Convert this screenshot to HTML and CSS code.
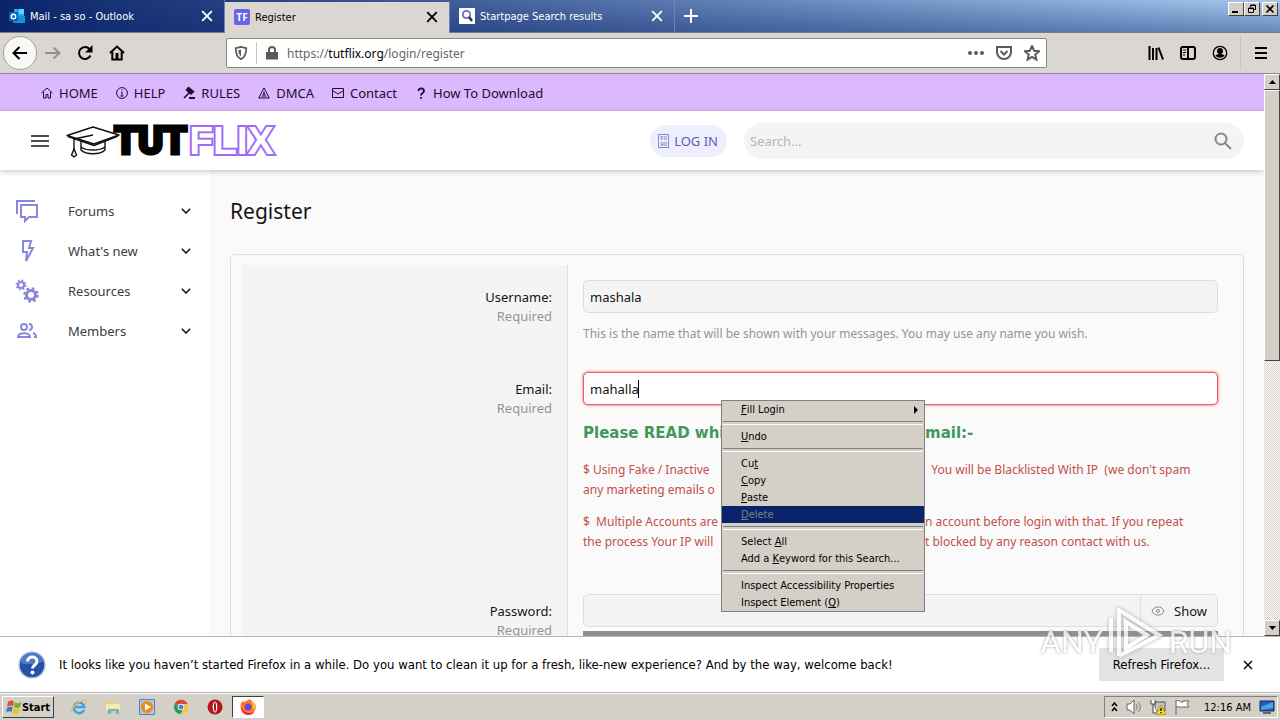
FILE: index.html
```
<!DOCTYPE html>
<html lang="en">
<head>
  <meta charset="UTF-8" />
  <meta name="viewport" content="width=device-width, initial-scale=1.0"/>
  <title>Register</title>
  <link rel="stylesheet" href="styles.css">
</head>
<body>
  <!-- tabs -->
  <header class="titlebar">
    <div class="tab">
      <svg class="fav" viewBox="0 0 16 16"><path fill="#28a8ea" d="M5 1h10v7H5z"/><path fill="#50d9ff" d="M10 1h5v5h-5z"/><path fill="#1490df" d="M4 7l12 1v7H4z"/><path fill="#0f5fb5" d="M0 4h9v9H0z"/><circle cx="4.5" cy="8.5" r="2.2" fill="none" stroke="#fff" stroke-width="1.4"/></svg>
      <span class="tab-name">Mail - sa so - Outlook</span>
      <button class="tab-close" aria-label="Close tab"><svg viewBox="0 0 10 10"><path d="M1 1l8 8M9 1L1 9"/></svg></button>
    </div>
    <div class="tab active">
      <span class="fav tf">TF</span>
      <span class="tab-name">Register</span>
      <button class="tab-close" aria-label="Close tab"><svg viewBox="0 0 10 10"><path d="M1 1l8 8M9 1L1 9"/></svg></button>
    </div>
    <div class="tab">
      <svg class="fav" viewBox="0 0 16 16"><path fill="#fff" d="M0 0h16v16H0z"/><circle cx="7.5" cy="6.5" r="3.7" fill="none" stroke="#5f6bd0" stroke-width="1.8"/><path d="M10 9l3 4" stroke="#222b55" stroke-width="2.4"/></svg>
      <span class="tab-name">Startpage Search results</span>
      <button class="tab-close" aria-label="Close tab"><svg viewBox="0 0 10 10"><path d="M1 1l8 8M9 1L1 9"/></svg></button>
    </div>
    <button class="new-tab" aria-label="New tab"><svg viewBox="0 0 14 14"><path d="M7 0v14M0 7h14"/></svg></button>
    <div class="win-buttons">
      <button aria-label="Minimize"><svg viewBox="0 0 10 10"><path fill="#000" d="M1 7h6v2H1z"/></svg></button>
      <button aria-label="Restore"><svg viewBox="0 0 10 10"><path d="M3.5 3V1h5v4.5H7M3 1.5h6M1.5 4h5v4.5h-5zM1 4.5h6" fill="none" stroke="#000"/></svg></button>
      <button class="close" aria-label="Close"><svg viewBox="0 0 10 10"><path d="M1.500 1.500l7 7M8.500 1.500l-7 7" stroke="#000" stroke-width="1.6"/></svg></button>
    </div>
  </header>

  <!-- toolbar -->
  <div class="toolbar">
    <button class="back" aria-label="Back"><svg class="i16" viewBox="0 0 16 16"><path d="M15 8H1.500M7.500 2L1.500 8l6 6"/></svg></button>
    <button class="tool forward" aria-label="Forward"><svg class="i16" viewBox="0 0 16 16"><path d="M0 8h14M8.500 2.500L14.500 8l-6 5.500"/></svg></button>
    <button class="tool" aria-label="Reload"><svg class="i16" viewBox="0 0 16 16"><path d="M13.500 10.500A6 6 0 1 1 12.500 4"/><path d="M15.500 0v7.500H8z" fill="#000" stroke="none"/></svg></button>
    <button class="tool" aria-label="Home"><svg class="i16" viewBox="0 0 16 16"><path d="M1 8l7-6.500L15 8M3.300 7v7.500h9.400V7"/><path d="M6.500 8h3v6h-3z" fill="#000" stroke="none"/></svg></button>
    <div class="urlbar">
      <svg class="i14" viewBox="0 0 16 16"><path d="M8 1l6 1.500C14 9 12 13 8 15 4 13 2 9 2 2.500z"/><path d="M8 4l-3 .8C5.200 8.500 6.200 10.500 8 12z" fill="#5b5b5b" stroke="none"/></svg>
      <span class="split"></span>
      <svg class="i14" viewBox="0 0 14 14"><path d="M4 7V4a3 3 0 0 1 6 0v3"/><path d="M1 6h12v7.500H1z" fill="#5b5b5b" stroke="none"/></svg>
      <span class="url">https://<b>tutflix.org</b>/login/register</span>
      <svg class="i16" viewBox="0 0 16 16"><g fill="#5b5b5b" stroke="none"><circle cx="2" cy="8" r="2"/><circle cx="8" cy="8" r="2"/><circle cx="14" cy="8" r="2"/></g></svg>
      <svg class="i16" viewBox="0 0 16 16"><path d="M1 2h14v5c0 4-3 7-7 7s-7-3-7-7zM4.500 6L8 9.500 11.500 6"/></svg>
      <svg class="i16" viewBox="0 0 16 16"><path d="M8 1l2.100 4.700 5 .5-3.800 3.400 1.100 5L8 12l-4.400 2.600 1.100-5L.9 6.200l5-.5z"/></svg>
    </div>
    <div class="tools-right">
      <button class="tool" aria-label="Library"><svg class="i16" viewBox="0 0 16 16"><path d="M1.500 1v14M5 3v12M8.500 3v12M10.500 2.500l4.500 12"/></svg></button>
      <button class="tool" aria-label="Sidebar"><svg class="i16" viewBox="0 0 16 16"><rect x="1" y="2" width="14" height="12" rx="2"/><path d="M8 2v12"/><path d="M3 5h3M3 7.500h3M3 10h2" stroke-width="1"/></svg></button>
      <button class="tool" aria-label="Account"><svg class="i16" viewBox="0 0 16 16"><circle cx="8" cy="8" r="6.700" stroke-width="1.300"/><g fill="#000" stroke="none"><circle cx="8" cy="6" r="3"/><path d="M3.500 10.500c2-2 7-2 9 0-2 3-7 3-9 0z"/></g></svg></button>
      <span class="split"></span>
      <button class="tool" aria-label="Menu"><svg class="i16" viewBox="0 0 16 16"><path d="M2 3h12M2 8h12M2 13h12"/></svg></button>
    </div>
  </div>

  <!-- page -->
  <div class="viewport">
    <div class="site">
      <nav class="topnav">
        <a href="#"><svg viewBox="0 0 12 12"><path d="M.5 6L6 1l5.500 5M2.500 5v6h2.500V7.500h2V11h2.500V5"/></svg>HOME</a>
        <a href="#"><svg viewBox="0 0 12 12"><circle cx="6" cy="6" r="5.400"/><path d="M6 5v4M5 5.500h1M4.500 9h3M6 2.500v1.200"/></svg>HELP</a>
        <a href="#"><svg viewBox="0 0 12 12"><path d="M5.500.5l5 4-2.500 2.500-4.500-4zM6 6l-5 5" stroke-width="1.600" fill="#1d0c33"/><path d="M6 11h6" stroke-width="2"/></svg>RULES</a>
        <a href="#"><svg viewBox="0 0 12 12"><path d="M6 1l5.300 10H.7zM6 4.500v3M6 8.500v1.300M4 10l2-4 2 4"/></svg>DMCA</a>
        <a href="#"><svg viewBox="0 0 12 12"><path d="M.5 1.500h11v9H.5zM.5 3.500L6 7l5.500-3.500"/></svg>Contact</a>
        <a href="#"><svg viewBox="0 0 12 12"><path d="M3.500 4c0-3.500 5.500-3.500 5.500 0C9 6 6 6 6 8.500M6 10v1.700" stroke-width="1.800"/></svg>How To Download</a>
      </nav>

      <div class="site-header">
        <button class="burger" aria-label="Menu"><svg viewBox="0 0 18 14"><path d="M0 2h18M0 7h18M0 12h18"/></svg></button>
        <a class="logo" href="#">
          <svg class="cap" viewBox="0 0 54 34"><g fill="#fff" stroke="#111" stroke-width="1.400" stroke-linejoin="round"><path d="M15 15v11c5 5 19 5 24 0V15"/><path d="M15 23c5 4 19 4 24 0" fill="none"/><path d="M1 11.500L27 3l26 8L28 20z"/><path d="M2 12.500l26 9 24-9.500M27 11L8 15v11" fill="none"/><path d="M8 25l-2.500 6 2.500 2 2.500-2z"/></g></svg>
          <span class="tut">TUT</span><span class="flix">FLIX</span>
        </a>
        <a class="login" href="#"><span class="tofu"><span>F0</span><span>90</span></span>LOG IN</a>
        <div class="search">
          <input type="text" placeholder="Search..." aria-label="Search">
          <svg viewBox="0 0 18 18"><circle cx="7" cy="7" r="5.500"/><path d="M11 11l6 6"/></svg>
        </div>
      </div>

      <div class="site-body">
        <nav class="side">
          <a href="#"><svg class="side-icon" viewBox="0 0 24 24"><path d="M2 15V2h18M6 6h16v12h-8l-4 4v-4H6z"/></svg>Forums<svg class="chev" viewBox="0 0 10 6"><path d="M.8.8L5 5 9.200.8"/></svg></a>
          <a href="#"><svg class="side-icon" viewBox="0 0 24 24"><path d="M8 2h8l-2 7h4l-7 13 1-9H8z"/></svg>What's new<svg class="chev" viewBox="0 0 10 6"><path d="M.8.8L5 5 9.200.8"/></svg></a>
          <a href="#"><svg class="side-icon" viewBox="0 0 24 24"><circle cx="6" cy="6" r="3"/><circle cx="6" cy="6" r="4.500" stroke-dasharray="1.600 1.930"/><circle cx="16" cy="16" r="4.500" stroke-width="3"/><circle cx="16" cy="16" r="6.500" stroke-width="2.600" stroke-dasharray="2.500 2.600"/></svg>Resources<svg class="chev" viewBox="0 0 10 6"><path d="M.8.8L5 5 9.200.8"/></svg></a>
          <a href="#"><svg class="side-icon" viewBox="0 0 24 24"><circle cx="9" cy="8" r="3"/><path d="M3 18c0-5 12-5 12 0zM14 5c4 0 4 6 0 6M18 14c3 1 3 2 3 4h-2"/></svg>Members<svg class="chev" viewBox="0 0 10 6"><path d="M.8.8L5 5 9.200.8"/></svg></a>
        </nav>

        <main>
          <h1>Register</h1>
          <form class="card">
            <div class="row">
              <div class="label"><label for="username">Username:</label><small>Required</small></div>
              <div class="field">
                <input class="input" id="username" type="text" value="mashala">
                <p class="hint">This is the name that will be shown with your messages. You may use any name you wish.</p>
              </div>
            </div>
            <div class="row">
              <div class="label"><label for="email">Email:</label><small>Required</small></div>
              <div class="field">
                <div class="input focus"><input id="email" type="text" value="mahalla" size="5"><i class="caret"></i></div>
                <h4 class="notice-title split-line"><span>Please READ whi</span><span>mail:-</span></h4>
                <div class="notice">
                  <p class="split-line"><span>$ Using Fake / Inactive</span><span>&nbsp; You will be Blacklisted With IP&nbsp; (we don't spam</span></p>
                  <p>any marketing emails o</p>
                </div>
                <div class="notice">
                  <p class="split-line"><span>$&nbsp; Multiple Accounts are</span><span>n account before login with that. If you repeat</span></p>
                  <p class="split-line"><span>the process Your IP will</span><span>t blocked by any reason contact with us.</span></p>
                </div>
              </div>
            </div>
            <div class="row">
              <div class="label"><label for="password">Password:</label><small>Required</small></div>
              <div class="field">
                <div class="input password">
                  <input id="password" type="password">
                  <button type="button"><svg viewBox="0 0 14 10"><path d="M1 5c2-5.500 10-5.500 12 0-2 5.500-10 5.500-12 0z"/><circle cx="7" cy="5" r="1.500"/></svg>Show</button>
                </div>
                <div class="strength"></div>
              </div>
            </div>
          </form>
        </main>
      </div>
    </div>

    <div class="scrollbar">
      <button aria-label="Scroll up"><svg viewBox="0 0 7 4"><path d="M0 4l3.500-4L7 4z"/></svg></button>
      <div class="thumb"></div>
      <button class="down" aria-label="Scroll down"><svg viewBox="0 0 7 4"><path d="M0 0l3.500 4L7 0z"/></svg></button>
    </div>
  </div>

  <!-- firefox notification -->
  <div class="notification">
    <svg class="help" viewBox="0 0 28 28"><circle cx="14" cy="14" r="13" fill="#2450a8" stroke="#b9c6e2" stroke-width="1.500"/><path d="M3 12a11 10 0 0 1 22-1c-7 1-14 4-22 1z" fill="#4f78c6"/><path d="M9.500 10.500c0-6 9.500-6 9.500 0 0 3.500-4.500 3.500-4.500 7" fill="none" stroke="#fff" stroke-width="3"/><circle cx="14.500" cy="21.500" r="2" fill="#fff"/></svg>
    <span class="message">It looks like you haven’t started Firefox in a while. Do you want to clean it up for a fresh, like-new experience? And by the way, welcome back!</span>
    <button class="refresh">Refresh Firefox...</button>
    <button class="dismiss" aria-label="Dismiss"><svg viewBox="0 0 10 10"><path d="M1 1l8 8M9 1L1 9"/></svg></button>
  </div>

  <!-- taskbar -->
  <footer class="taskbar">
    <button class="start"><svg viewBox="0 0 16 16"><path fill="#e0522a" d="M2 3c2-2 4-2 6-.5L7 7.500C5 6 3 6.500 1 8z"/><path fill="#6cb52d" d="M9 3c2 1.500 4 1.500 6.500 0L14 8c-2 1.500-4 1-6 0z"/><path fill="#3c78d0" d="M1 9c2-1.500 4-1.500 5.700-.5L5.500 13C4 12 2 12 0 13.500z"/><path fill="#f5bc1c" d="M7.700 9c2 1.500 4 1.500 6 .3L12.500 14c-2 1.500-4 1-6 0z"/></svg>Start</button>
    <a href="#" aria-label="Internet Explorer"><svg viewBox="0 0 16 16"><path d="M13 11a5.300 5.300 0 1 1 .4-3H4" fill="none" stroke="#3da3e0" stroke-width="2.500"/><path d="M1 14C-1 9 9 0 15 1.500c1 .5.500 2 0 3" fill="none" stroke="#e9bd3a" stroke-width="1.300"/></svg></a>
    <a href="#" aria-label="Explorer"><svg viewBox="0 0 16 16"><path fill="#e9cf72" d="M1 2h6l1 2h6v10H1z"/><path fill="#f8eaa6" d="M1 5h14v7H1z"/><path fill="#65b5de" d="M3 10h11v5h-3v-3H6v3H3z"/></svg></a>
    <a href="#" aria-label="Media Player"><svg viewBox="0 0 16 16"><path fill="#a9c8e8" stroke="#5682b4" d="M.5.5h15v15H.5z"/><circle cx="8" cy="8" r="6" fill="#f08a13"/><path fill="#fff" d="M6 4.500L12 8l-6 3.500z"/></svg></a>
    <a href="#" aria-label="Chrome"><svg viewBox="0 0 16 16"><circle cx="8" cy="8" r="7" fill="#f4c82c"/><path fill="#dc4437" d="M8 8L1.900 4.500a7 7 0 0 1 12.600.5H8z"/><path fill="#2a9a51" d="M1.900 4.500A7 7 0 0 0 7.500 15L10 10z"/><circle cx="8" cy="8" r="3.300" fill="#fff"/><circle cx="8" cy="8" r="2.500" fill="#4586ef"/></svg></a>
    <a href="#" aria-label="Opera"><svg viewBox="0 0 16 16"><circle cx="8" cy="8" r="7.500" fill="#b5141b"/><ellipse cx="8" cy="8" rx="2.300" ry="5.500" fill="#fff"/><ellipse cx="8" cy="8" rx="1" ry="4.700" fill="#a51018"/></svg></a>
    <a class="running" href="#" aria-label="Firefox"><svg viewBox="0 0 16 16"><path fill="#ff7a22" d="M1 4l2-2 2 1c2-2 4-2 5-3 1 2 4 3 5.500 6C17 12 12 16 8 16 3 16-1 11 1 4z"/><path fill="#ffd03a" d="M11 1c4 3 5 7 3 11-1-4-1-7-3-11z"/><path fill="#e8284f" d="M1 8c0 5 4 8 7 8 3 0 5-1 6-3-5 2-10 1-13-5z"/><circle cx="8" cy="8" r="3.500" fill="#6849d5"/></svg></a>
    <div class="tray">
      <svg class="up" viewBox="0 0 7 10"><path d="M1 4l2.500-3L6 4M1 9l2.500-3L6 9" fill="none" stroke="#000" stroke-width="1.500"/></svg>
      <svg viewBox="0 0 16 16"><path d="M1 5h3l4-4v14l-4-4H1z" fill="#fff" stroke="#666"/><path d="M10 5c1.500 2 1.500 4 0 6M12 3c3 3 3 7 0 10" fill="none" stroke="#777"/></svg>
      <svg viewBox="0 0 16 16"><path d="M5 3h10v9H5z" fill="#c3c3c3" stroke="#555"/><path d="M1 1v4h4V1M3 5v9h4" fill="#fff" stroke="#444"/><path d="M11 6l5 9.500H6z" fill="#ffdb1e" stroke="#9a7d00" stroke-width=".6"/><path d="M11 9v3M11 13v1.300" stroke="#000" stroke-width="1.300"/></svg>
      <svg viewBox="0 0 16 16"><path d="M2 1v15M2 2c4-2 4 2 7 1v-1h6l-2 3 2 3H9c-3 1-4-1-7 0" fill="#fff" stroke="#666"/></svg>
      <time>12:16 AM</time>
      <svg viewBox="0 0 16 16"><path d="M1 2h14v10H1z" fill="#1d62c0" stroke="#224"/><path d="M2 8l12-5v6L2 11z" fill="#4fa0ea"/><path d="M4 13h8v2H4z" fill="#666"/></svg>
    </div>
  </footer>

  <!-- context menu -->
  <ul class="menu">
    <li><u>F</u>ill Login<svg viewBox="0 0 4 8"><path d="M0 0l4 4-4 4z"/></svg></li>
    <li class="sep"></li>
    <li><u>U</u>ndo</li>
    <li class="sep"></li>
    <li>Cu<u>t</u></li>
    <li><u>C</u>opy</li>
    <li><u>P</u>aste</li>
    <li class="selected"><u>D</u>elete</li>
    <li class="sep"></li>
    <li>Select <u>A</u>ll</li>
    <li>Add a <u>K</u>eyword for this Search...</li>
    <li class="sep"></li>
    <li>Inspect Accessibility Properties</li>
    <li>Inspect Element (<u>Q</u>)</li>
  </ul>

  <div class="watermark"><span>ANY</span><svg viewBox="0 0 56 52"><path d="M3 44V10M11 48V2l40 25-40 21M18 40V14l21 13z"/></svg><span>RUN</span></div>
</body>
</html>
```
FILE: styles.css
```
* { box-sizing: border-box; }
body { margin: 0; height: 100vh; display: flex; flex-direction: column; overflow: hidden; position: relative; font-family: "DejaVu Sans Condensed", "Noto Sans", sans-serif; font-size: 11px; color: #000; background: #d4d0c8; }
button { font: inherit; color: inherit; border: 0; padding: 0; background: none; display: flex; align-items: center; justify-content: center; }
a { color: inherit; text-decoration: none; }
p, h1, h4, ul { margin: 0; padding: 0; }
svg { display: block; flex: none; }
input { font: inherit; color: inherit; border: 0; outline: 0; background: none; min-width: 0; padding: 0; }

/* title bar and tabs */
.titlebar { height: 33px; display: flex; background: linear-gradient(rgba(10,36,106,0), rgba(10,36,106,.4)), linear-gradient(90deg, #0a246a, #a6caf0); border-bottom: 1px solid #7d7d7d; }
.tab { width: 225px; height: 32px; display: flex; align-items: center; padding: 0 11px 0 9px; color: #fff; border-right: 1px solid #6d84b8; }
.tab.active { height: 31px; margin-top: 2px; padding-bottom: 1px; background: #dad7d2; color: #000; }
.fav { width: 16px; height: 16px; margin-right: 5px; }
.tf { background: #6964e8; color: #fff; border-radius: 2px; font: bold 10px/16px "Open Sans", sans-serif; text-align: center; }
.tab-name { flex: 1; }
.tab-close svg { width: 12px; height: 12px; fill: none; stroke: currentColor; stroke-width: 1.5; }
.new-tab { width: 32px; }
.new-tab svg { width: 14px; height: 14px; stroke: #fff; stroke-width: 2; }
.win-buttons { display: flex; margin: 2px 2px 0 auto; }
.win-buttons button { width: 16px; height: 14px; background: #d4d0c8; border: 1px solid; border-color: #fff #404040 #404040 #fff; }
.win-buttons svg { width: 10px; height: 10px; }
.win-buttons .close { margin-left: 2px; }

/* toolbar */
.toolbar { height: 41px; display: flex; align-items: center; padding: 0 3px; background: #dad7d2; border-bottom: 1px solid #8d8599; }
.toolbar svg { fill: none; stroke: #000; stroke-width: 2; }
.i16 { width: 16px; height: 16px; }
.i14 { width: 14px; height: 14px; }
.back { width: 34px; height: 34px; border-radius: 50%; background: #f9f8f7; border: 1px solid #a5a29d; }
.tool { width: 32px; height: 32px; }
.toolbar .forward svg { stroke: #94918c; }
.urlbar { flex: 0 1 821px; height: 30px; margin-left: 93px; display: flex; align-items: center; gap: 12px; padding: 0 6px 0 7px; background: #fff; border: 1px solid #8a8883; border-radius: 2px; }
.urlbar svg { stroke: #5b5b5b; }
.split { width: 1px; height: 22px; background: #c6c4c0; }
.urlbar .split { margin: 0 -4px; }
.url { flex: 1; margin-left: -4px; color: #666; font: 12px "Noto Sans", sans-serif; }
.url b { font-weight: normal; color: #000; }
.tools-right { display: flex; align-items: center; margin-left: auto; }
.tools-right .split { height: 34px; margin: 0 4px; }

/* page area */
.viewport { flex: 1; min-height: 0; display: flex; }
.site { flex: 1; min-width: 0; overflow: hidden; background: #fafafa; font-family: "Noto Sans", sans-serif; font-size: 13px; }
.topnav { height: 37px; display: flex; align-items: center; gap: 18px; padding-left: 41px; background: #dcb9ff; color: #1d0c33; }
.topnav a { display: flex; align-items: center; gap: 6px; }
.topnav svg { width: 12px; height: 12px; fill: none; stroke: currentColor; }
.site-header { height: 59px; display: flex; align-items: center; padding: 0 20px 0 31px; background: #fff; box-shadow: 0 1px 6px rgba(0,0,0,.25); position: relative; }
.burger svg { width: 18px; height: 14px; stroke: #4f4f4f; stroke-width: 2; }
.logo { display: flex; align-items: center; margin-left: 17px; line-height: 44px; }
.cap { width: 54px; height: 34px; margin-right: -6px; }
.tut, .flix { paint-order: stroke fill; }
.tut { font-family: Roboto, sans-serif; font-weight: 900; font-size: 38px; color: #000; -webkit-text-stroke: 3px #000; }
.flix { margin-left: 2px; font-family: "Liberation Sans", sans-serif; font-weight: bold; font-size: 39px; color: #fff; -webkit-text-stroke: 4px #a06cf4; }
.login { display: flex; align-items: center; gap: 5px; height: 32px; margin-left: auto; padding: 0 9px 0 8px; border-radius: 16px; background: #eeeefc; color: #5b5cb8; }
.tofu { display: grid; border: 1px solid #8488d6; font-size: 6px; line-height: 6px; padding: 0 1px; }
.search { width: 500px; height: 36px; margin-left: 17px; display: flex; align-items: center; padding: 0 12px 0 6px; border-radius: 18px; background: #f4f4f4; }
.search input { flex: 1; }
.search input::placeholder { color: #b4b4b4; }
.search svg { width: 18px; height: 18px; fill: none; stroke: #888; stroke-width: 2; }
.site-body { display: flex; }
.side { width: 210px; height: 600px; padding-top: 21px; background: #fff; color: #3c3c3c; }
.side a { height: 40px; display: flex; align-items: center; padding: 0 19px 0 15px; }
.side-icon { width: 24px; height: 24px; margin-right: 29px; fill: none; stroke: #8a86dc; stroke-width: 2; }
.chev { width: 10px; height: 6px; margin-left: auto; fill: none; stroke: #111; stroke-width: 1.5; }

/* register form */
main { flex: 1; padding: 26px 20px 0; }
h1 { font-weight: normal; font-size: 21px; line-height: 30px; margin-bottom: 28px; color: #141414; }
.card { padding: 10px 25px 0 11px; border: 1px solid #dedede; border-radius: 5px; }
.row { display: grid; grid-template-columns: 326px 1fr; }
.label { padding: 23px 15px 0; text-align: right; line-height: 19px; background: #f4f4f4; border-right: 1px solid #dfdfdf; color: #141414; }
.label label, .label small { display: block; font-size: 13px; }
.label small { color: #949494; }
.field { padding: 15px 0 0 15px; }
.input { width: 100%; height: 33px; padding: 0 6px; display: flex; align-items: center; border: 1px solid #dfdfdf; border-radius: 5px; background: #f4f4f4; color: #141414; }
.focus { background: #fff; border-color: #ea5d68; box-shadow: 0 0 3px #f04a55; }
.focus input { width: 48px; }
.caret { width: 1px; height: 18px; background: #000; }
.hint { margin: 11px 0 14px; font-size: 12px; line-height: 19px; color: #949494; }
.notice-title { margin-top: 16px; font: bold 15px/24px "DejaVu Sans", sans-serif; color: #41985a; }
.notice { margin-top: 15px; font-size: 12px; line-height: 20px; color: #c2504d; }
.notice + .notice { margin: 12px 0 27px; }
.split-line { display: grid; grid-template-columns: 342px 1fr; white-space: nowrap; }
.password { padding-right: 0; }
.password input { flex: 1; }
.password button { width: 77px; height: 31px; gap: 9px; border-left: 1px solid #dfdfdf; }
.password svg { width: 14px; height: 10px; fill: none; stroke: #888; }
.strength { height: 12px; margin-top: 4px; background: #8f8f8f; }

/* scrollbar */
.scrollbar { width: 16px; display: flex; flex-direction: column; background: repeating-conic-gradient(#fff 0 25%, #d4d0c8 0 50%) 0 0 / 2px 2px; }
.scrollbar button, .thumb { background: #d4d0c8; border: 1px solid; border-color: #fff #404040 #404040 #fff; }
.scrollbar button { height: 16px; }
.scrollbar svg { width: 7px; height: 4px; }
.thumb { height: 271px; }
.down { margin-top: auto; }

/* notification bar */
.notification { height: 57px; display: flex; align-items: center; padding: 0 27px 0 18px; background: #fff; border-top: 1px solid #b5b5b5; border-bottom: 1px solid #b5b5b5; font-size: 13px; }
.help { width: 28px; height: 28px; margin-right: 13px; }
.message { flex: 1; }
.refresh { width: 125px; height: 33px; background: #e3e3e3; }
.dismiss { margin-left: 19px; }
.dismiss svg { width: 10px; height: 10px; stroke: #111; stroke-width: 1.6; }

/* taskbar */
.taskbar { height: 27px; display: flex; align-items: center; padding: 1px 2px; background: #d4d0c8; border-top: 1px solid #fff; }
.taskbar svg { width: 16px; height: 16px; }
.start { width: 52px; height: 22px; margin-right: 8px; font-weight: bold; border: 1px solid; border-color: #fff #404040 #404040 #fff; }
.taskbar a { width: 34px; height: 22px; display: flex; align-items: center; justify-content: center; }
.taskbar .running { width: 32px; background: #fff; border: 1px solid; border-color: #404040 #fff #fff #404040; }
.tray { height: 22px; margin-left: auto; display: flex; align-items: center; gap: 8px; padding: 0 2px 0 6px; border: 1px solid; border-color: #808080 #fff #fff #808080; }
.tray .up { width: 7px; height: 10px; }
.tray time { margin-left: 6px; }

/* context menu */
.menu { position: absolute; left: 721px; top: 400px; width: 204px; list-style: none; background: #d4d0c8; border: 1px solid #808080; }
.menu li { height: 17px; display: flex; align-items: center; padding: 0 6px 0 19px; line-height: 17px; white-space: pre; }
.menu svg { width: 4px; height: 8px; margin-left: auto; }
.menu .selected { background: #0a246a; color: #808080; }
.menu .sep { height: 10px; padding: 0 1px; }
.sep::before { content: ""; width: 100%; height: 2px; border-top: 1px solid #808080; border-bottom: 1px solid #fff; }

/* watermark */
.watermark { position: absolute; right: 48px; bottom: 60px; display: flex; align-items: flex-end; gap: 5px; opacity: .8; pointer-events: none; font: 32px/36px Roboto, sans-serif; color: #fff; text-shadow: 0 0 3px #888; }
.watermark svg { width: 56px; height: 52px; fill: none; stroke: #fff; stroke-width: 4; filter: drop-shadow(0 0 2px #999); }
```
